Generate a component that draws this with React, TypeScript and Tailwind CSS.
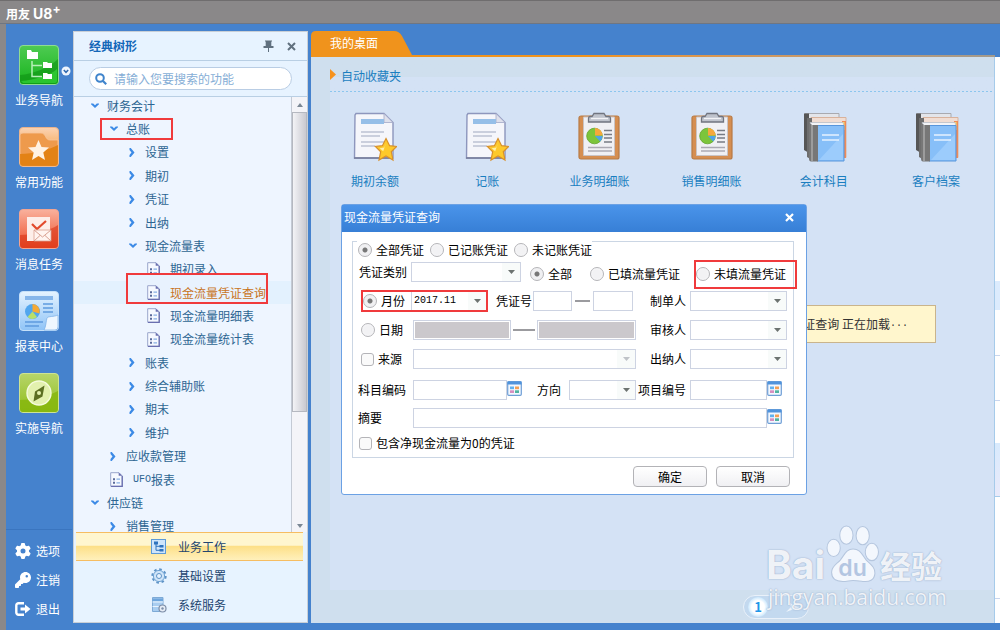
import type { ReactNode } from "react";
import { FaGear, FaKey } from "react-icons/fa6";

/* ---------- Rail icons ---------- */

function Gloss({ id, top, bottom, edge, children }: { id: string; top: string; bottom: string; edge: string; children: ReactNode }) {
  return (
    <svg viewBox="0 0 40 40" className="size-10" aria-hidden="true">
      <defs>
        <linearGradient id={id} x1="0" y1="0" x2="0" y2="1">
          <stop offset="0" stopColor={top} />
          <stop offset="1" stopColor={bottom} />
        </linearGradient>
      </defs>
      <rect x="0.5" y="0.5" width="39" height="39" rx="3.5" fill={`url(#${id})`} stroke={edge} />
      {children}
    </svg>
  );
}

function TreeTile() {
  return (
    <Gloss id="g-tree" top="#4ecb52" bottom="#17b31c" edge="#8fdc92">
      <path d="M1 30C14 29 30 23 39 14V36a3 3 0 0 1-3 3H4a3 3 0 0 1-3-3Z" fill="#0c8e12" opacity=".55" />
      <path d="M2 36C16 35 32 30 38 24V36q0 2-2 2H4z" fill="#3ade3d" opacity=".6" />
      <path d="M13 16v15.500h10M13 20.500h10" fill="none" stroke="#b6efb8" strokeWidth="1.500" />
      <path d="M8 5h4l1 2h6v7H8zM24 17h4l1 1h4v5h-9zM24 28h4l1 1h4v5h-9z" fill="#fff" />
    </Gloss>
  );
}

function StarTile() {
  return (
    <Gloss id="g-star" top="#fbd3b4" bottom="#f08a12" edge="#e9b28b">
      <path d="M1 8q0-2 3-2h18c5 0 4 7 9 7h8v23a3 3 0 0 1-3 3H4a3 3 0 0 1-3-3z" fill="#ee9a4c" stroke="#f8c79e" strokeWidth=".8" />
      <path d="M1 27C14 27 30 23 39 18v18a3 3 0 0 1-3 3H4a3 3 0 0 1-3-3z" fill="#e07c08" opacity=".8" />
      <path d="M19.500 13l3 7 7.500.6-5.700 5 1.700 7.400-6.500-4-6.500 4 1.700-7.400-5.700-5 7.500-.6z" fill="#fff2e4" />
    </Gloss>
  );
}

function MailTile() {
  return (
    <Gloss id="g-mail" top="#f9b19d" bottom="#ee4d27" edge="#f2a491">
      <path d="M1 26C14 26 30 22 39 16v20a3 3 0 0 1-3 3H4a3 3 0 0 1-3-3z" fill="#d93415" opacity=".6" />
      <path d="M8 8h23v24H8z" fill="#fdeee9" />
      <path d="M13 15l5 5 9-8" fill="none" stroke="#e24a2c" strokeWidth="2.200" />
      <path d="M15 21h17v11H15z" fill="#fff4f0" stroke="#dba191" strokeWidth=".8" />
      <path d="M15 21l8.500 7 8.500-7M15 32l6-5.500M32 32l-6-5.500" fill="none" stroke="#d9a192" />
    </Gloss>
  );
}

function ReportTile() {
  return (
    <Gloss id="g-report" top="#e5f3ff" bottom="#8fc4f7" edge="#c5e0f9">
      <path d="M6 5h28v4H6z" fill="#86b6ea" />
      <path d="M24 13h10M24 17h10M24 21h10M6 31h18M6 35h14" stroke="#5d9ade" strokeWidth="1.600" />
      <circle cx="13.500" cy="20.500" r="7.500" fill="#51a6ee" />
      <path d="M13.500 20.500V13a7.500 7.500 0 0 1 7 9.500z" fill="#f6a935" />
      <path d="M13.500 20.500l-5 5.500a7.500 7.500 0 0 0 9.500 0z" fill="#b8df6a" />
      <path d="M39 24c-4 2-10 1-11 3-1 3-1 9-3 12h11a3 3 0 0 0 3-3z" fill="#eef7ff" stroke="#77aee6" strokeWidth=".7" />
    </Gloss>
  );
}

function CompassTile() {
  return (
    <Gloss id="g-compass" top="#b7d56a" bottom="#8fbd1a" edge="#cde394">
      <path d="M1 27C14 27 30 23 39 18v18a3 3 0 0 1-3 3H4a3 3 0 0 1-3-3z" fill="#86b60c" opacity=".8" />
      <circle cx="20" cy="20" r="12" fill="#e3f1ae" stroke="#f5fbdc" strokeWidth="1.400" />
      <path d="M25.500 12.500l-2 11-9 5 1.500-10z" fill="#5c6f22" />
      <circle cx="20" cy="20" r="2" fill="#e3f1ae" />
    </Gloss>
  );
}

function ExitIcon() {
  return (
    <svg viewBox="0 0 16 14" className="h-[14px] w-4" aria-hidden="true">
      <path d="M9 1.200H3.500A2.200 2.200 0 0 0 1.300 3.400v7.200a2.200 2.200 0 0 0 2.200 2.200H9" fill="none" stroke="#fff" strokeWidth="2.400" />
      <path d="M5.500 5.500H10V2.500L15.500 7 10 11.500v-3H5.500z" fill="#fff" />
    </svg>
  );
}

/* ---------- Small icons ---------- */

function DocIcon() {
  return (
    <svg viewBox="0 0 13 15" className="h-[15px] w-[13px]" aria-hidden="true">
      <path d="M.7.700H9l3 3v10.600H.700z" fill="#f6f9ff" stroke="#9aa6cc" />
      <path d="M12.300 4v10.300H1" fill="none" stroke="#6a6fb0" strokeWidth="1.200" />
      <path d="M8.700.5v3.300h3.600z" fill="#6a6fb0" />
      <path d="M3 6.200h2v2H3zM3 9.800h2v2H3z" fill="#5a6a9a" />
      <path d="M6.500 7.200h3.500M6.500 10.800h3.500" stroke="#86aee2" strokeWidth="1.300" />
    </svg>
  );
}

function Arrow({ open }: { open?: boolean }) {
  return open ? (
    <svg viewBox="0 0 8 6" className="h-[6px] w-2" aria-hidden="true">
      <path d="M0 .5h2.200L4 2.200 5.800.5H8v.8L4 5 0 1.300z" fill="#3c8ae6" />
    </svg>
  ) : (
    <svg viewBox="0 0 6 9" className="h-[9px] w-[6px]" aria-hidden="true">
      <path d="M.5 0h1.300L5.500 4.500 1.800 9H.5V7L2.500 4.500.5 2z" fill="#3c8ae6" />
    </svg>
  );
}

function StructureIcon() {
  return (
    <svg viewBox="0 0 15 15" className="size-[15px]" aria-hidden="true">
      <rect x=".5" y=".5" width="14" height="14" fill="#cfe5fb" stroke="#5d9ad8" />
      <path d="M3 2.500h4v3H3zM8.500 6h4v2.500h-4zM8.500 10h4v2.500h-4z" fill="#2f73bd" />
      <path d="M5 5v6.300h4M5 7.300h4" fill="none" stroke="#2f73bd" />
    </svg>
  );
}

function GearOutline() {
  return (
    <svg viewBox="0 0 16 16" className="size-4" aria-hidden="true">
      <circle cx="8" cy="8" r="6.700" fill="none" stroke="#5f93c6" strokeWidth="2" strokeDasharray="2.600 2.661" />
      <circle cx="8" cy="8" r="5.600" fill="#cfe4f8" stroke="#6fa3d4" />
      <circle cx="8" cy="8" r="2.500" fill="#e6f2ff" stroke="#5f93c6" />
    </svg>
  );
}

function ServerIcon() {
  return (
    <svg viewBox="0 0 16 16" className="size-4" aria-hidden="true">
      <path d="M1.500.500H12V14.500H1.500z" fill="#a9cdf0" stroke="#7eaad6" />
      <path d="M1.500 5H12M1.500 9.500H12" stroke="#e9f4ff" />
      <path d="M1.500 1.500H12V4H1.500z" fill="#6ea5dc" />
      <circle cx="11.500" cy="11.500" r="3.500" fill="#e7edf6" stroke="#7d8ea8" strokeWidth="1.200" />
      <circle cx="11.500" cy="11.500" r="1.200" fill="#7d8ea8" />
    </svg>
  );
}

/* ---------- Desktop icons ---------- */

function NoteIcon() {
  return (
    <svg viewBox="0 0 44 50" className="h-[50px] w-11" aria-hidden="true">
      <path d="M3 1.500h28l9 9V46H1.500L2 3z" fill="#f5f6fb" stroke="#8d96bd" strokeWidth="1.400" />
      <path d="M31 1.500V10.500h9z" fill="#dfe1ec" stroke="#a3aac8" strokeWidth=".8" />
      <path d="M8 7h23v5H8z" fill="#96bfe8" />
      <path d="M8 20h23M8 24h19M8 30h23M8 34h14" stroke="#bcc2d4" strokeWidth="1.400" />
      <path d="M1 46h39" stroke="#767d9a" strokeWidth="1.500" />
      <path d="M33 26.500l3.600 7.200 7 .8-5.300 5.200 1.700 8.300-7-4-7 4 1.700-8.300-5.300-5.200 7-.8z" fill="#fdc92b" stroke="#d8902a" strokeWidth="1.200" />
      <path d="M33 31l-1.800 4.500-4.500.7 3.500 3z" fill="#fff0a8" />
    </svg>
  );
}

function ClipboardIcon() {
  return (
    <svg viewBox="0 0 44 50" className="h-[50px] w-11" aria-hidden="true">
      <rect x="2" y="4" width="40" height="43" rx="2" fill="#d58e51" stroke="#b87a45" strokeWidth="1.200" />
      <path d="M6.500 5h31v38.500h-31z" fill="#f0f0f4" stroke="#c9c3c4" />
      <path d="M17 1.500h10l2 3h3q1.500 0 1.500 2V10H11.500V6.500q0-2 1.500-2h2z" fill="#bfc3cc" stroke="#70747f" strokeWidth="1.300" />
      <path d="M14 6.500h17" stroke="#f2f3f6" strokeWidth="1.400" />
      <circle cx="17.500" cy="24" r="7.800" fill="#7cc53b" stroke="#62a32c" strokeWidth=".8" />
      <path d="M18 23.500V16a7.500 7.500 0 0 1 7.500 7.500z" fill="#f5a83c" />
      <path d="M18 24h7.500a7.500 7.500 0 0 1-2.300 5.500z" fill="#4ea4e8" />
      <path d="M27 18.500h8M27 22.500h8M27 26h8M27 30h8" stroke="#777b84" strokeWidth="1.300" />
      <path d="M11 35.500h24M11 39h24" stroke="#aaa9b2" strokeWidth="1.500" />
    </svg>
  );
}

function BooksIcon() {
  return (
    <svg viewBox="0 0 48 52" className="h-[52px] w-12" aria-hidden="true">
      <path d="M5 1.500h34v36H5z" fill="#e3e5ea" stroke="#a9aab0" />
      <path d="M4 1.500h5V41l-5-3z" fill="#565656" />
      <path d="M11 5.500h35v40H11z" fill="#f0ddd3" stroke="#d8b29c" />
      <path d="M42 9h4v37h-4z" fill="#f08a57" />
      <path d="M43 10h1.500v8H43z" fill="#f8e06a" />
      <path d="M7 6h5v42l-5-3z" fill="#6e6e6e" />
      <path d="M10 10.500h33l1 3.500H12z" fill="#f3f4f7" stroke="#b9bec7" strokeWidth=".8" />
      <path d="M17 13.500h27V49H17z" fill="#87bff8" stroke="#5896dc" />
      <path d="M19 48L43 22v26z" fill="#a5d1fd" opacity=".7" />
      <path d="M9 10q1 3 3 3h6v36.500h-7q-2 0-2-3z" fill="#777" />
      <path d="M12 13v36" stroke="#a9a9a9" strokeWidth="1.500" />
      <path d="M22 23h17M22 28h17" stroke="#e6f2fe" strokeWidth="1.600" />
    </svg>
  );
}

/* ---------- Data ---------- */

const railItems = [
  { label: "业务导航", icon: <TreeTile />, menu: true },
  { label: "常用功能", icon: <StarTile /> },
  { label: "消息任务", icon: <MailTile /> },
  { label: "报表中心", icon: <ReportTile /> },
  { label: "实施导航", icon: <CompassTile /> },
];

const railActions = [
  { label: "选项", icon: <FaGear className="size-4" /> },
  { label: "注销", icon: <FaKey className="size-4" /> },
  { label: "退出", icon: <ExitIcon /> },
];

type Node = { label: string; level: 0 | 1 | 2 | 3; kind: "open" | "closed" | "doc"; mark?: "box" | "active" };

const nodes: Node[] = [
  { label: "财务会计", level: 0, kind: "open" },
  { label: "总账", level: 1, kind: "open", mark: "box" },
  { label: "设置", level: 2, kind: "closed" },
  { label: "期初", level: 2, kind: "closed" },
  { label: "凭证", level: 2, kind: "closed" },
  { label: "出纳", level: 2, kind: "closed" },
  { label: "现金流量表", level: 2, kind: "open" },
  { label: "期初录入", level: 3, kind: "doc" },
  { label: "现金流量凭证查询", level: 3, kind: "doc", mark: "active" },
  { label: "现金流量明细表", level: 3, kind: "doc" },
  { label: "现金流量统计表", level: 3, kind: "doc" },
  { label: "账表", level: 2, kind: "closed" },
  { label: "综合辅助账", level: 2, kind: "closed" },
  { label: "期末", level: 2, kind: "closed" },
  { label: "维护", level: 2, kind: "closed" },
  { label: "应收款管理", level: 1, kind: "closed" },
  { label: "UFO报表", level: 1, kind: "doc" },
  { label: "供应链", level: 0, kind: "open" },
  { label: "销售管理", level: 1, kind: "closed" },
];

const indent = { 0: "pl-[17px]", 1: "pl-[36px]", 2: "pl-[55px]", 3: "pl-[73px]" };

const desktop = [
  { label: "期初余额", icon: <NoteIcon /> },
  { label: "记账", icon: <NoteIcon /> },
  { label: "业务明细账", icon: <ClipboardIcon /> },
  { label: "销售明细账", icon: <ClipboardIcon /> },
  { label: "会计科目", icon: <BooksIcon /> },
  { label: "客户档案", icon: <BooksIcon /> },
];

/* ---------- Form controls ---------- */

function Radio({ name, label, checked }: { name: string; label: string; checked?: boolean }) {
  return (
    <label className="flex items-center gap-1 whitespace-nowrap">
      <input
        type="radio"
        name={name}
        defaultChecked={checked}
        className="size-[14px] shrink-0 appearance-none rounded-full border border-[#b4b4b8] bg-[radial-gradient(circle,#f2f2f4_50%,#fff)] checked:bg-[radial-gradient(circle,#777_2px,#f0f0f2_3px)]"
      />
      {label}
    </label>
  );
}

function Check({ label }: { label: string }) {
  return (
    <label className="flex items-center gap-1 whitespace-nowrap">
      <input type="checkbox" className="size-[13px] shrink-0 appearance-none rounded-[3px] border border-[#b4b4b8] bg-[#fafafa] checked:bg-[#5f93c6]" />
      {label}
    </label>
  );
}

function Text({ label, className, disabled }: { label: string; className: string; disabled?: boolean }) {
  return (
    <input
      type="text"
      aria-label={label}
      disabled={disabled}
      className={`h-5 min-w-0 border border-[#cdd3e2] bg-white px-1 outline-none disabled:bg-[#cbc8cc] disabled:shadow-[inset_0_0_0_1px_#fff] ${className}`}
    />
  );
}

function Select({ label, id, className, value, faded }: { label: string; id?: string; className: string; value?: string; faded?: boolean }) {
  return (
    <span className={`relative flex h-5 border border-[#cdd3e2] bg-white ${className}`}>
      <select
        id={id}
        aria-label={label}
        defaultValue={value ?? ""}
        className="w-full appearance-none bg-transparent px-[2px] font-['Liberation_Mono','Noto_Sans_CJK_SC',monospace] text-[10px] leading-4 outline-none"
      >
        <option value={value ?? ""}>{value ?? ""}</option>
      </select>
      <span className="pointer-events-none absolute inset-y-0 right-0 flex w-[18px] items-center justify-center bg-[#f8fbfa]">
        <svg viewBox="0 0 7 4" className={faded ? "h-1 w-[7px] text-[#bfc3c8]" : "h-1 w-[7px] text-[#6c7370]"} aria-hidden="true">
          <path d="M0 0h7L3.500 4z" fill="currentColor" />
        </svg>
      </span>
    </span>
  );
}

function Lookup({ label }: { label: string }) {
  return (
    <button type="button" aria-label={label} className="-mt-1 size-[15px] shrink-0">
      <svg viewBox="0 0 15 15" className="size-[15px]" aria-hidden="true">
        <rect x=".7" y=".7" width="13.600" height="13.600" rx="1" fill="#f3f8ff" stroke="#6f9fd6" strokeWidth="1.200" />
        <path d="M.5.500h14v3H.500z" fill="#4f93dc" />
        <path d="M3 5.500h4v2.700H3z" fill="#62b1ee" />
        <path d="M8 5.500h4v2.700H8z" fill="#f2a057" />
        <path d="M3 9.300h4V12H3z" fill="#d78fc0" />
        <path d="M8 9.300h4V12H8z" fill="#52b3a0" />
      </svg>
    </button>
  );
}

const row = "grid grid-cols-[56px_223px_54px_97px] items-center";

function QueryDialog() {
  return (
    <section
      aria-label="现金流量凭证查询"
      className="absolute top-[173px] left-[30px] z-20 w-[466px] rounded-[3px] border border-[#6ba1e4] bg-white pb-[7px] text-black"
    >
      <header className="flex h-[27px] items-center justify-between bg-linear-to-b from-[#4a94ea] to-[#377fd6] pr-3 pb-1 pl-[2px] text-white">
        <h2>现金流量凭证查询</h2>
        <button type="button" aria-label="关闭" className="mt-[2px] flex size-[9px]">
          <svg viewBox="0 0 9 9" className="size-[9px]" aria-hidden="true">
            <path d="M1 1l7 7M8 1l-7 7" stroke="#fff" strokeWidth="2.200" />
          </svg>
        </button>
      </header>

      <form>
        <div role="group" aria-label="查询条件" className="mt-[9px] mr-3 ml-[10px] border border-[#cbd6e4] pl-1">
          <div className="-mt-px flex h-4 w-fit gap-[6px] bg-white pt-px pl-px leading-none">
            <Radio name="posted" label="全部凭证" checked />
            <Radio name="posted" label="已记账凭证" />
            <Radio name="posted" label="未记账凭证" />
          </div>

          <div className="flex h-[30px] items-center">
            <label htmlFor="type" className="w-[54px] shrink-0 pl-[2px]">凭证类别</label>
            <Select id="type" label="凭证类别" className="w-[110px] shrink-0" />
            <div className="flex shrink-0 gap-[18px] pt-1 pl-[9px]">
              <Radio name="flow" label="全部" checked />
              <Radio name="flow" label="已填流量凭证" />
            </div>
            <div className="mt-1 -mr-1 ml-auto flex h-[29px] w-[103px] shrink-0 items-center border-2 border-[#f03a3c]">
              <Radio name="flow" label="未填流量凭证" />
            </div>
          </div>

          <div className={`${row} h-7`}>
            <div className="col-span-2 flex items-center">
              <div className="ml-1 flex h-[22px] w-[127px] items-center justify-between border-2 border-[#f03a3c]">
                <Radio name="range" label="月份" checked />
                <Select label="月份" value="2017.11" className="h-[18px] w-[75px] border-y-0 border-r-0" />
              </div>
              <label htmlFor="no" className="mr-px ml-2 w-9 whitespace-nowrap">凭证号</label>
              <input id="no" type="text" className="h-5 w-[39px] border border-[#cdd3e2] bg-white px-1 outline-none" />
              <span className="mx-[3px] h-[2px] flex-1 bg-[#9b9b9f]" />
              <Text label="凭证号止" className="mr-[3px] w-10" />
            </div>
            <label htmlFor="maker" className="pl-[14px]">制单人</label>
            <Select id="maker" label="制单人" className="" />
          </div>

          <div className={`${row} h-[30px]`}>
            <div className="pl-1"><Radio name="range" label="日期" /></div>
            <div className="flex items-center">
              <Text label="日期起" disabled className="w-[98px]" />
              <span className="mx-[2px] h-[2px] flex-1 bg-[#9b9b9f]" />
              <Text label="日期止" disabled className="w-[99px]" />
            </div>
            <label htmlFor="auditor" className="pl-[14px]">审核人</label>
            <Select id="auditor" label="审核人" className="" />
          </div>

          <div className={`${row} h-7`}>
            <div className="pl-1"><Check label="来源" /></div>
            <Select label="来源" className="" faded />
            <label htmlFor="cashier" className="pl-[14px]">出纳人</label>
            <Select id="cashier" label="出纳人" className="" />
          </div>

          <div className={`${row} h-[34px]`}>
            <label htmlFor="subject" className="pl-px">科目编码</label>
            <div className="flex items-center">
              <input id="subject" type="text" className="h-5 w-[94px] border border-[#cdd3e2] bg-white px-1 outline-none" />
              <Lookup label="选择科目" />
              <label htmlFor="side" className="ml-[15px] flex-1">方向</label>
              <Select id="side" label="方向" className="w-[67px]" />
            </div>
            <label htmlFor="project" className="pl-[2px] whitespace-nowrap">项目编号</label>
            <div className="flex items-center">
              <input id="project" type="text" className="h-5 w-[77px] border border-[#cdd3e2] bg-white px-1 outline-none" />
              <Lookup label="选择项目" />
            </div>
          </div>

          <div className="flex h-[22px] items-center">
            <label htmlFor="memo" className="w-14 pl-px">摘要</label>
            <input id="memo" type="text" className="h-5 w-[354px] border border-[#cdd3e2] bg-white px-1 outline-none" />
            <Lookup label="选择摘要" />
          </div>

          <div className="flex h-7 items-center pl-[2px]">
            <Check label="包含净现金流量为0的凭证" />
          </div>
        </div>

        <div className="mt-2 flex justify-end gap-[9px] pr-4">
          <button type="button" className="h-[21px] w-[74px] rounded-[4px] border border-[#b3b3b7] bg-linear-to-b from-white to-[#f0f0f3] leading-none">确定</button>
          <button type="button" className="h-[21px] w-[74px] rounded-[4px] border border-[#b3b3b7] bg-linear-to-b from-white to-[#f0f0f3] leading-none">取消</button>
        </div>
      </form>
    </section>
  );
}

/* ---------- Page parts ---------- */

function Rail() {
  return (
    <nav aria-label="导航" className="flex w-[66px] shrink-0 flex-col justify-between text-white">
      <ul className="flex flex-col gap-[14px] pt-[21px]">
        {railItems.map((item) => (
          <li key={item.label} className="relative">
            <button type="button" className="flex w-full flex-col items-center gap-[6px] whitespace-nowrap">
              {item.icon}
              <span className="h-[22px] leading-[18px]">{item.label}</span>
            </button>
            {item.menu && (
              <svg viewBox="0 0 10 10" className="absolute top-[21px] right-[1px] size-[10px]" aria-hidden="true">
                <circle cx="5" cy="5" r="4.500" fill="#eef5fd" />
                <path d="M2.800 4L5 6.300 7.200 4" fill="none" stroke="#2f69b0" strokeWidth="1.500" />
              </svg>
            )}
          </li>
        ))}
      </ul>
      <ul className="border-t border-[#3a75bf] pt-[6px]">
        {railActions.map((a) => (
          <li key={a.label}>
            <button type="button" className="flex h-[29px] items-center gap-[5px] pl-[9px] whitespace-nowrap">
              {a.icon}
              {a.label}
            </button>
          </li>
        ))}
      </ul>
    </nav>
  );
}

function TreeRow({ node }: { node: Node }) {
  const active = node.mark === "active";
  return (
    <li className={`relative flex items-center ${indent[node.level]} ${active ? "bg-[#e3f1fe]" : ""}`}>
      {node.mark === "box" && <span className="absolute inset-y-px left-[26px] w-[73px] border-2 border-[#f03a3c]" />}
      {active && <span className="absolute -top-2 bottom-0 left-[52px] w-[142px] border-2 border-[#f03a3c] bg-[#e8f2fe]" />}
      <a href="#" className={`relative flex items-center whitespace-nowrap ${active ? "text-[#c8741c]" : "text-[#2d6592]"}`}>
        <span className={`flex items-center ${node.kind === "doc" ? "w-[23px]" : "w-4"}`}>
          {node.kind === "doc" ? <DocIcon /> : <Arrow open={node.kind === "open"} />}
        </span>
        {node.label.startsWith("UFO") ? (
          <>
            <span className="font-['Liberation_Mono',monospace] text-[10px]">UFO</span>
            {node.label.slice(3)}
          </>
        ) : (
          node.label
        )}
      </a>
    </li>
  );
}

function TreePanel() {
  return (
    <aside className="flex w-[235px] shrink-0 flex-col border border-[#c9cfd6] bg-[#e7f3ff]">
      <header className="flex h-[29px] items-center border-b border-[#b9cfe4] pr-[11px] pl-[15px]">
        <h2 className="flex-1 font-bold text-[#1467b8]">经典树形</h2>
        <button type="button" aria-label="固定" className="mr-[13px]">
          <svg viewBox="0 0 11 12" className="h-3 w-[11px]" aria-hidden="true">
            <path d="M2 .5h7v1H8.300v4.500h2.200V8H.5V6H2.700V1.500H2zM5 8h1v4H5z" fill="#60707f" />
          </svg>
        </button>
        <button type="button" aria-label="关闭">
          <svg viewBox="0 0 9 9" className="size-[9px]" aria-hidden="true">
            <path d="M1 1l7 7M8 1L1 8" stroke="#60707f" strokeWidth="2" />
          </svg>
        </button>
      </header>
      <div className="border-b border-[#b9cfe4] px-[15px] pt-[6px] pb-[6px]">
        <label className="flex h-[23px] items-center gap-[7px] rounded-full border border-[#b9cde4] bg-white pl-[5px]">
          <svg viewBox="0 0 12 12" className="size-3 shrink-0" aria-hidden="true">
            <circle cx="5" cy="5" r="3.800" fill="none" stroke="#3f84cc" strokeWidth="2" />
            <path d="M8 8l3.200 3.200" stroke="#3f84cc" strokeWidth="2.200" />
          </svg>
          <input type="search" aria-label="搜索功能" placeholder="请输入您要搜索的功能" className="w-full min-w-0 bg-transparent outline-none placeholder:text-[#86aed6]" />
        </label>
      </div>
      <div className="flex h-[435px] overflow-hidden bg-[#eef5ff]">
        <ul className="-mt-[3px] grid h-[444px] flex-1 grid-rows-[repeat(19,minmax(0,1fr))]">
          {nodes.map((n) => (
            <TreeRow key={n.label} node={n} />
          ))}
        </ul>
        <div aria-hidden="true" className="flex w-4 flex-col border-l border-[#c4cad4] bg-[#f4f4f8]">
          <span className="flex h-[15px] items-center justify-center">
            <svg viewBox="0 0 6 4" className="h-1 w-[6px]"><path d="M0 4l3-4 3 4z" fill="#7b8794" /></svg>
          </span>
          <span className="h-[300px] border border-[#b5b8c0] bg-linear-to-r from-[#f3f3f6] to-[#c9c9d0]" />
          <span className="flex flex-1 items-end justify-center pb-1">
            <svg viewBox="0 0 6 4" className="h-1 w-[6px]"><path d="M0 0l3 4 3-4z" fill="#7b8794" /></svg>
          </span>
        </div>
      </div>
      <ul className="flex flex-1 flex-col text-[#23456f]">
        <li className="mr-1 ml-[2px] flex h-[29px] border-y border-[#f6bd62] bg-linear-to-b from-[#fff6cf] from-45% via-[#fde088] via-50% to-[#fff0bb]">
          <button type="button" className="flex items-center gap-3 pl-[75px]"><StructureIcon />业务工作</button>
        </li>
        <li className="flex h-[30px]">
          <button type="button" className="flex items-center gap-[11px] pl-[77px]"><GearOutline />基础设置</button>
        </li>
        <li className="flex h-[28px]">
          <button type="button" className="flex items-center gap-[11px] pl-[77px]"><ServerIcon />系统服务</button>
        </li>
      </ul>
    </aside>
  );
}

function Watermark() {
  return (
    <div className="pointer-events-none absolute right-[49px] bottom-[13px] z-10 w-[180px] text-white/85 [text-shadow:0_0_1px_#93a9c8,0_0_2px_#a8bbd6]">
      <div className="flex items-end">
        <span className="w-[60px] font-['Inter','Liberation_Sans',sans-serif] text-[39px] leading-[38px] font-bold">Bai</span>
        <span className="relative flex h-[60px] w-[53px] items-end justify-center">
          <svg viewBox="0 0 52 58" className="absolute inset-0 h-[60px] w-[53px]" aria-hidden="true">
            <g fill="#f3f7fd" stroke="#b5c6de" strokeWidth="1">
              <ellipse cx="7.500" cy="23" rx="6.500" ry="8.500" />
              <ellipse cx="20" cy="10.500" rx="6.500" ry="9" />
              <ellipse cx="36" cy="11" rx="6.500" ry="9" />
              <ellipse cx="45" cy="27" rx="6.500" ry="8.500" />
              <path d="M26.500 24c7 0 9 6 13 11 4 4 9 7 8.500 13-.5 7-6 8.500-11 8-4-.5-7-1-10.500-1s-6 1-10 1c-6 0-11-2-11-9 0-6 5-8 8.500-12 4-5 6-11 12.500-11z" />
            </g>
          </svg>
          <span className="relative font-['Inter',sans-serif] text-[23px] leading-[32px] font-semibold text-[#b3c6e2] [text-shadow:none]">du</span>
        </span>
        <span className="ml-px text-[31px] leading-[38px] font-bold">经验</span>
      </div>
      <div className="pl-[2px] font-['Open_Sans',sans-serif] text-[21px] leading-[26px]">jingyan.baidu.com</div>
    </div>
  );
}

function Desktop() {
  return (
    <main className="relative flex min-w-0 flex-1 flex-col">
      <div className="flex h-[26px] items-end">
        <div className="relative h-[26px] w-[101px]">
          <svg viewBox="0 0 101 26" className="absolute inset-0 h-[26px] w-[101px]" aria-hidden="true">
            <path d="M0 26V5q0-5 5-5h78q5 0 8 5l10 19v2z" fill="#f0931c" />
          </svg>
          <button type="button" className="relative flex h-6 items-center pl-[19px] text-white">我的桌面</button>
        </div>
        <div className="h-[2px] flex-1 bg-linear-to-r from-[#f0931c] from-30% to-[#a39a8c]" />
      </div>

      <div className="flex flex-1 flex-col border-r border-[#a6cbea] bg-[#cfdfee]">
        <div className="ml-[19px] flex flex-1 flex-col bg-[#d4e2f5]">
          <h2 className="flex h-[34px] items-center gap-[5px] bg-linear-to-b from-[#cfdfee] from-60% to-[#d4e2f5] to-60% text-[#1a7ec0]">
            <svg viewBox="0 0 6 11" className="h-[11px] w-[6px]" aria-hidden="true"><path d="M0 0l6 5.500L0 11z" fill="#f7921e" /></svg>
            <span className="pt-1">自动收藏夹</span>
          </h2>
          <div className="h-px bg-[repeating-linear-gradient(to_right,#8cc6ee_0_2px,transparent_2px_4px)]" />
          <ul className="-ml-[11px] grid grid-cols-6 pt-5 pr-[2px]">
            {desktop.map((d) => (
              <li key={d.label} className="flex justify-center">
                <a href="#" className="flex flex-col items-center text-[#1a7ec0]">
                  <span className="flex h-[54px] items-start">{d.icon}</span>
                  <span className="pt-[7px]">{d.label}</span>
                </a>
              </li>
            ))}
          </ul>
        </div>
        <footer className="flex h-[33px] items-center justify-end pr-[185px]">
          <div className="flex h-6 w-[66px] items-center justify-between rounded-full border border-[#e9f1fa] bg-[#c3d9ef] pr-2 pl-1">
            <button type="button" className="size-5 rounded-full bg-[radial-gradient(circle,#fff_45%,#8ccbfa)] text-[13px] leading-5 font-bold text-[#1f97e8]">1</button>
            <svg viewBox="0 0 14 10" className="h-[10px] w-[14px]" aria-hidden="true"><path d="M0 10l5-5-1-4 5 3 5 2-6 1z" fill="#eef5fc" /></svg>
          </div>
        </footer>
      </div>

      <p role="status" className="absolute top-[274px] right-[59px] z-10 flex h-[38px] w-[230px] items-center justify-end border border-[#c9b48c] bg-[#fff6cd] pr-[27px] whitespace-pre text-[#333]">
        现金流量凭证查询 正在加载<span className="font-['Liberation_Mono',monospace] text-[10px]">...</span>
      </p>
      <QueryDialog />
      <Watermark />
    </main>
  );
}

export default function App() {
  return (
    <div className="flex min-h-screen flex-col bg-[#8a8889] font-['Noto_Sans_CJK_SC',sans-serif] text-[12px] leading-4">
      <header className="flex h-6 items-center gap-[3px] border-t border-b border-t-[#6f6d6e] border-b-[#6f7682] pt-1 pl-[6px] text-white">
        <span className="font-bold">用友</span>
        <span className="flex font-['Inter',sans-serif] text-[14px] font-bold">
          U8<sup className="-top-[3px] text-[12px] leading-3">+</sup>
        </span>
      </header>
      <div className="ml-[6px] flex flex-1 bg-[#4582cd] pb-[7px]">
        <Rail />
        <div className="flex pt-[7px] pl-px">
          <TreePanel />
        </div>
        <div className="flex min-w-0 flex-1 pt-[7px] pl-[3px]">
          <Desktop />
          <div aria-hidden="true" className="mt-[26px] flex w-[5px] shrink-0 flex-col bg-white">
            <span className="mt-[224px] h-[29px] bg-[#dcebfd]" />
            <span className="mt-[45px] h-px bg-[#c9d6ee]" />
            <span className="mt-[44px] h-px bg-[#c9d6ee]" />
            <span className="mt-[42px] h-[54px] border-b border-[#a6cbea] bg-linear-to-b from-[#d8eafd] to-[#e9eafa]" />
            <span className="mt-[101px] h-px bg-[#c9d6ee]" />
          </div>
        </div>
      </div>
    </div>
  );
}
